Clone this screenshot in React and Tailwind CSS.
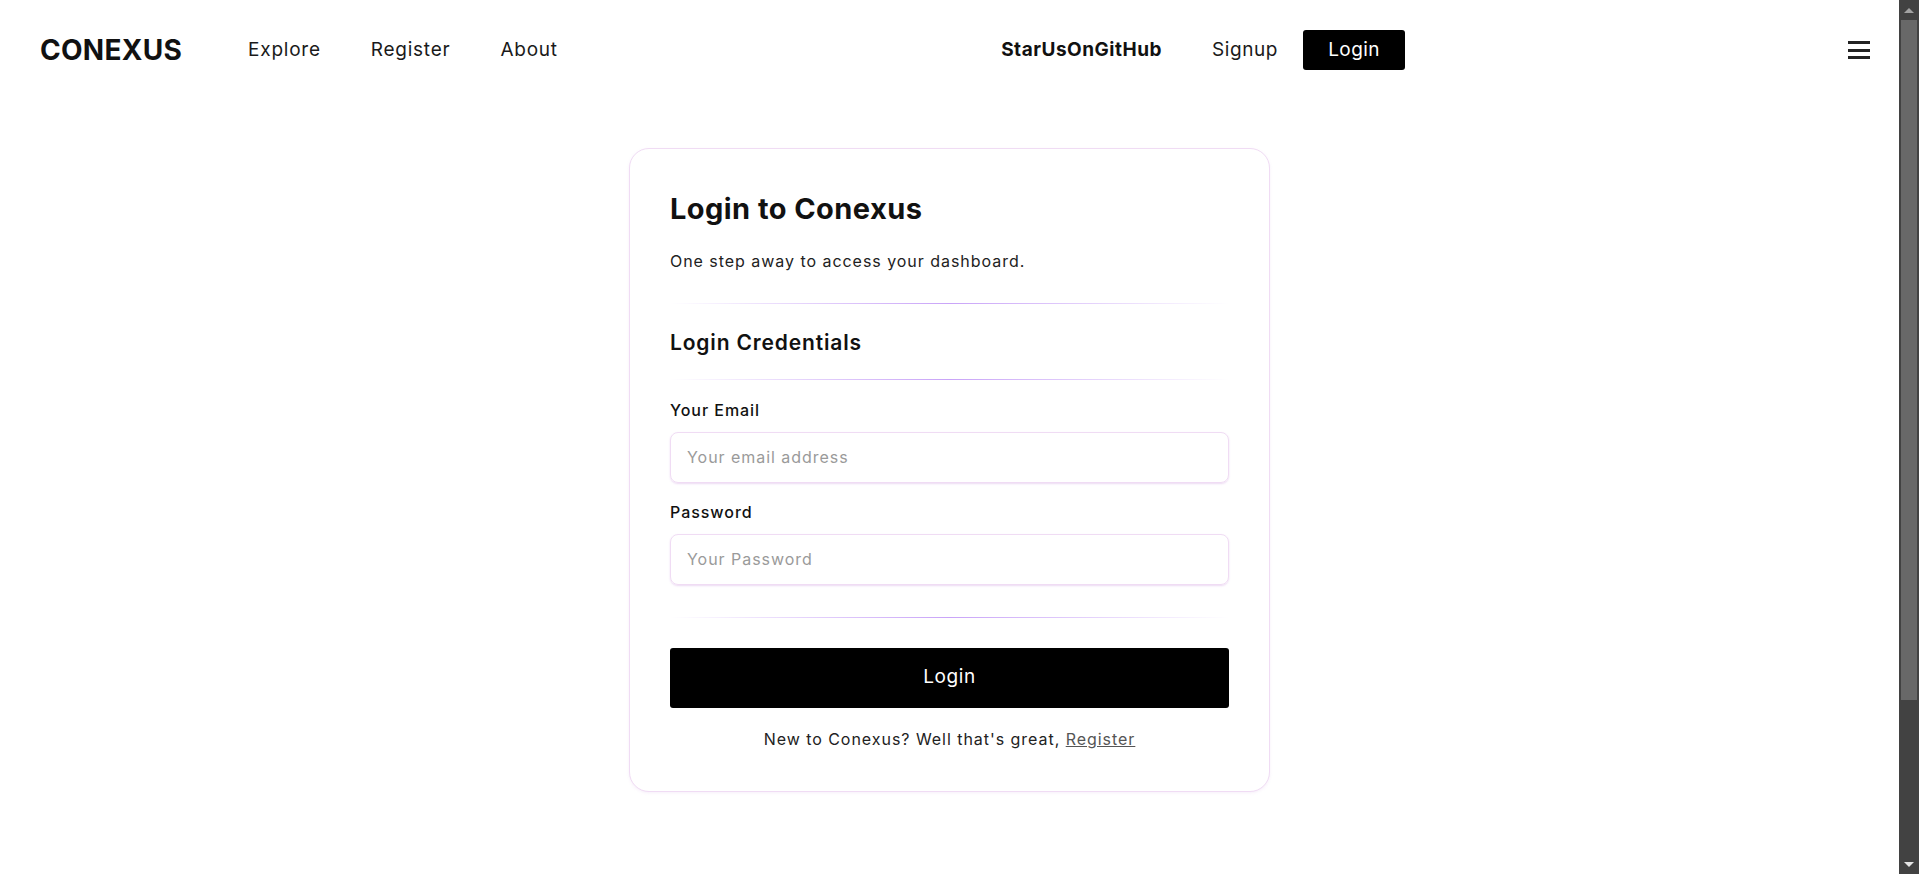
import { useState } from "react";

const Divider = ({ className = "" }) => (
    <div className={`h-px w-full bg-gradient-to-r from-transparent via-[#c9a4f8] to-transparent ${className}`} />
);

// fake classic scrollbar, as in the screenshot
const Scrollbar = () => (
    <div className="w-[20px] h-full bg-[#424242] flex flex-col items-center shrink-0">
        <div className="h-[20px] w-full flex items-center justify-center">
            <div className="w-0 h-0 border-l-[5px] border-r-[5px] border-b-[5px] border-l-transparent border-r-transparent border-b-[#a3a3a3]" />
        </div>
        <div className="w-[16px] h-[680px] bg-[#686868]" />
        <div className="flex-1" />
        <div className="h-[20px] w-full flex items-center justify-center">
            <div className="w-0 h-0 border-l-[5px] border-r-[5px] border-t-[5px] border-l-transparent border-r-transparent border-t-[#e5e5e5]" />
        </div>
    </div>
);

const App = () => {
    const [form, setForm] = useState({ email: "", password: "" });

    return (
        <div className="flex h-[874px] overflow-hidden bg-white text-[#111] font-['Inter','Liberation_Sans',sans-serif]">
            <div className="flex-1 min-w-0">
                {/* navbar */}
                <nav className="flex items-center h-[98px] pl-10 pt-[2px]">
                    <div className="flex items-center">
                        <span className="text-[28px] font-bold tracking-[0.01em] text-[#111]">CONEXUS</span>
                        <div className="flex items-center gap-[50px] ml-[66px] text-[19px] tracking-[0.04em] text-[#1a1a1a]">
                            <a href="#">Explore</a>
                            <a href="#">Register</a>
                            <a href="#">About</a>
                        </div>
                    </div>
                    <div className="flex-1" />
                    <div className="flex items-center text-[19px]">
                        <a href="#" className="font-bold tracking-[0.027em] text-[#111]">StarUsOnGitHub</a>
                        <a href="#" className="ml-[50px] tracking-[0.03em] text-[#1a1a1a]">Signup</a>
                        <button className="ml-[25px] h-10 w-[102px] bg-black text-white tracking-[0.02em] rounded-[3px]">Login</button>
                    </div>
                    <button className="ml-[443px] mr-[29px] flex flex-col gap-[4.5px] w-[22px]">
                        <span className="block h-[3px] w-full bg-[#222]" />
                        <span className="block h-[3px] w-full bg-[#222]" />
                        <span className="block h-[3px] w-full bg-[#222]" />
                    </button>
                </nav>

                {/* card */}
                <div className="flex justify-center pt-[50px]">
                    <form
                        onSubmit={(e) => e.preventDefault()}
                        className="w-[641px] rounded-[20px] border border-[#f0dcf4] bg-white px-10 pt-[42px] pb-[40px] shadow-[0_1px_3px_rgba(200,150,220,0.15)]"
                    >
                        <h1 className="text-[29px] font-bold leading-[36px] tracking-[0.015em] text-[#111]">Login to Conexus</h1>
                        <p className="mt-[22px] text-[16px] tracking-[0.06em] text-[#222]">One step away to access your dashboard.</p>
                        <Divider className="mt-[30px]" />
                        <h2 className="mt-[23px] text-[21px] font-semibold tracking-[0.04em] text-[#111]">Login Credentials</h2>
                        <Divider className="mt-[20px]" />

                        <label className="block mt-[18px] text-[16px] font-medium tracking-[0.06em] text-[#111]">Your Email</label>
                        <input
                            type="email"
                            value={form.email}
                            onChange={(e) => setForm({ ...form, email: e.target.value })}
                            placeholder="Your email address"
                            className="mt-[10px] w-full h-[51px] rounded-lg border border-[#f0dcf4] px-4 text-[16px] tracking-[0.06em] placeholder-[#9a9a9a] shadow-[0_1px_2px_rgba(200,150,220,0.35)] focus:outline-none"
                        />

                        <label className="block mt-[17px] text-[16px] font-medium tracking-[0.06em] text-[#111]">Password</label>
                        <input
                            type="password"
                            value={form.password}
                            onChange={(e) => setForm({ ...form, password: e.target.value })}
                            placeholder="Your Password"
                            className="mt-[10px] w-full h-[51px] rounded-lg border border-[#f0dcf4] px-4 text-[16px] tracking-[0.06em] placeholder-[#9a9a9a] shadow-[0_1px_2px_rgba(200,150,220,0.35)] focus:outline-none"
                        />

                        <Divider className="mt-[32px]" />

                        <button
                            type="submit"
                            className="mt-[30px] w-full h-[60px] bg-black text-white text-[19px] tracking-[0.03em] rounded-[3px]"
                        >
                            Login
                        </button>

                        <p className="mt-[19px] text-center text-[16px] tracking-[0.06em] text-[#222]">
                            New to Conexus? Well that's great,{" "}
                            <a href="#" className="underline text-[#555]">Register</a>
                        </p>
                    </form>
                </div>
            </div>
            <Scrollbar />
        </div>
    );
};

export default App;
